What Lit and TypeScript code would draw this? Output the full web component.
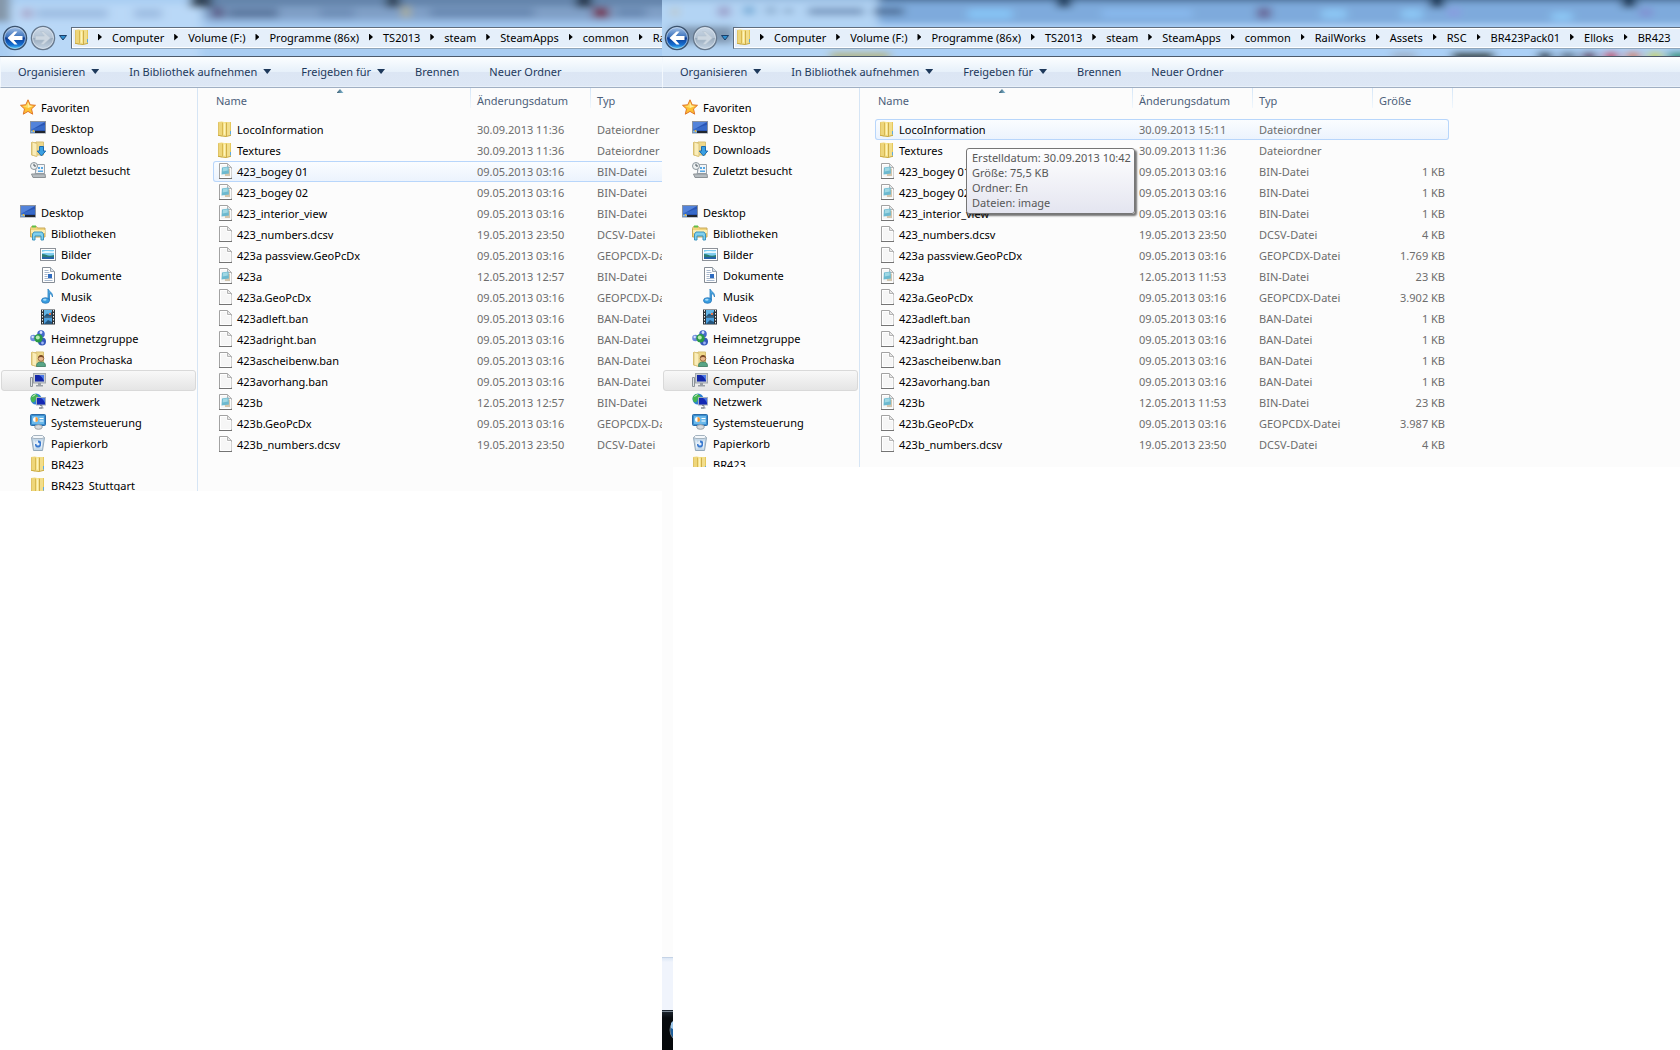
import { LitElement, html, css, svg, nothing, TemplateResult } from "lit";
import { customElement, property } from "lit/decorators.js";
import { classMap } from "lit/directives/class-map.js";

type Entry = { icon: string; name: string; date: string; type: string; size?: string };
type NavItem = { icon: string; label: string; level: number; active?: boolean; gap?: boolean };

const page = svg`
  <path d="M2.500 .5h8l4 4v11h-12z" fill="#f6f6f6" stroke="#a2a2a2"/>
  <path d="M2 15.500h13" stroke="#747474"/>
  <path d="M3.500 14.500v-13h6.500v4h4v9z" fill="#f6f6f6" stroke="#fff"/>
  <path d="M10.500 .5v4h4z" fill="#e8e8e8" stroke="#b4b4b4"/>`;

const folder = svg`
  <path d="M1 1l4-.5v15l-4-1z" fill="#eed67a"/>
  <path d="M8 1h6v13.500H8z" fill="#e6c85c"/>
  <path d="M10 1h3v13h-3z" fill="#f2de8c"/>
  <path d="M5 .5l4.500 1v14.300l-4.500-1.300z" fill="#f6e38f"/>
  <path d="M1.500 1.500v12.500" stroke="#e0c366"/>
  <path d="M5.500 1.500v13" stroke="#d8b850"/>
  <path d="M9.500 2v13" stroke="#cfae48"/>
  <path d="M1 14.300l4 .7 4 .5 5-1.200" fill="none" stroke="#c9a93f"/>
  <path d="M7.500 2.500v11" stroke="#fdf3bd"/>
  <path d="M13 10h1v3.500h-1z" fill="#5fa9dc"/>`;

const plainFolder = svg`
  <path d="M1.500 1.500h4.500v13.500l-4.500-1z" fill="#f0d98a" stroke="#d3b968"/>
  <path d="M6 1h7.500v13H6z" fill="#efd88b" stroke="#d6bf76"/>
  <path d="M2 1l5 1.500v13l-5-1.500z" fill="#faedb8" stroke="#dcc57c"/>`;

const monitor = svg`
  <rect x=".5" y="1.500" width="15" height="11.500" fill="#2a56b4" stroke="#8b93a0"/>
  <path d="M1 2h14L1 10z" fill="#5383da"/>
  <path d="M1 9C5 9 9 6 15 5v5H1z" fill="#3d73d2" opacity=".7"/>
  <path d="M5 11h10v2H5z" fill="#20262f"/>
  <path d="M1 11.500h4" stroke="#7bbcf2" stroke-width="2"/>
  <circle cx="3.500" cy="11" r="1" fill="#f2b632"/>`;

const icons: Record<string, TemplateResult> = {
  folder,
  file: page,
  bin: svg`${page}
    <path d="M7 5.500h6V13H8z" fill="#d3c6ae"/>
    <path d="M5 4.500l6.500-1 .5 7-7.500 1z" fill="#6cb9cf"/>
    <path d="M6 5l4.500-.7.3 3.200L5.700 8.500z" fill="#a0d8e4"/>`,
  star: svg`<path d="M8 .8l2.200 5 5.300.5-4 3.600 1.200 5.300L8 12.400l-4.700 2.800 1.200-5.300-4-3.600 5.300-.5z" fill="#fdc133" stroke="#e0762a"/>
    <path d="M8 3l1.500 3.600 3.500.4-5 2z" fill="#fff0a0"/>
    <path d="M2.500 7l3.500-.3L8 3v6z" fill="#ffde6a"/>`,
  desktop: monitor,
  downloads: svg`${plainFolder}
    <path d="M9.500 5.500h4V10h2.200l-4.200 5-4.200-5h2.200z" fill="#3ba0e2" stroke="#1d6bb0"/>`,
  recent: svg`
    <path d="M5.500 2.500h9v9h-9z" fill="#f2f5f8" stroke="#9aa3ab"/>
    <path d="M2 12.500h3l1-5" stroke="#9aa3ab" fill="none"/>
    <path d="M1.500 12h13.500l.5 3.500H3z" fill="#b6bcc0" stroke="#8c9296"/>
    <path d="M8 5h2v2H8zM11 5h2v2h-2zM8 8.500h5v1.500H8z" fill="#58a8e4"/>
    <circle cx="4" cy="4" r="3.500" fill="#eef1f2" stroke="#8d979d"/>
    <path d="M4 1.800V4h2" stroke="#49545c" fill="none"/>`,
  libraries: svg`
    <path d="M.5 3.500l1-2h5l1 1.500h7.500v9H.5z" fill="#f1d57c" stroke="#c9a95a"/>
    <path d="M2 1.500h4" stroke="#5fbf49" stroke-width="2"/>
    <path d="M1 5h14v3H1z" fill="#fbedb0"/>
    <path d="M2.500 15v-6l1.500-2h8l1.500 2v6h-2.500v-4H5v4z" fill="#7fd0ee" stroke="#3c93bd"/>`,
  pictures: svg`
    <rect x=".5" y="2.500" width="15" height="12" fill="#fff" stroke="#8d9299"/>
    <rect x="2" y="4" width="12" height="9" fill="#7fcdf0"/>
    <path d="M2 6c4-2 7 0 12-1v2H2z" fill="#e6f8ff"/>
    <path d="M2 8c4 0 6 3 12 1v4H2z" fill="#2b7d74"/>
    <path d="M2 11h12v2H2z" fill="#2464a8"/>`,
  documents: svg`
    <path d="M2.500 .5h8l4 4v11h-12z" fill="#fff" stroke="#858c95"/>
    <path d="M10.500 .5v4h4" fill="#dce3ea" stroke="#9ba4ae"/>
    <path d="M4.500 3.500h4M4.500 5.500h5M4.500 7.500h3M4.500 9.500h3M4.500 11.500h8M4.500 13.500h8" stroke="#a8b8cc"/>
    <rect x="8" y="7" width="4" height="4" fill="#2f6cc0"/>`,
  music: svg`
    <path d="M8 1c1 3 5 3 4.500 8-.5-2-1.500-3-3-3.500V12H8z" fill="#4ea9e2" stroke="#2a7fc0" stroke-width=".8"/>
    <ellipse cx="5.500" cy="12.500" rx="4" ry="2.800" fill="#3a9ee0" stroke="#2473b8" stroke-width=".8"/>
    <ellipse cx="4.800" cy="11.800" rx="1.800" ry="1" fill="#a5dafa"/>`,
  videos: svg`
    <rect x="1" y=".5" width="14" height="15" fill="#2d3338"/>
    <rect x="4" y="1" width="8" height="6.500" fill="#63b4e4"/>
    <rect x="4" y="8.500" width="8" height="6.500" fill="#4c9fdc"/>
    <path d="M4 7.500l3-3 2 1 3-3v5zM4 15l4-4 4 2v2z" fill="#24557c"/>
    <path d="M9 4h2v2H9z" fill="#e5764c"/>
    <path d="M2.500 1v15M13.500 1v15" stroke="#f0f0f0" stroke-dasharray="1.500 1.500"/>`,
  homegroup: svg`
    <circle cx="3.500" cy="8" r="3.300" fill="#6d8bdc"/>
    <circle cx="11" cy="4" r="3.800" fill="#4468cb"/>
    <circle cx="12" cy="11.500" r="4" fill="#3558bb"/>
    <circle cx="8.500" cy="8.300" r="4.200" fill="#2a9a47"/>
    <circle cx="7.800" cy="7.500" r="2" fill="#b8ecb0"/>
    <circle cx="2.700" cy="7" r="1.200" fill="#d5e0ff"/>
    <circle cx="11" cy="2.500" r="1.400" fill="#d5e0ff"/>
    <circle cx="12.500" cy="13" r="1.400" fill="#9fb7f5"/>`,
  user: svg`${plainFolder}
    <path d="M6.500 15.500c0-4 2-4.500 4.500-4.500s4.500.5 4.500 4.500z" fill="#58a586" stroke="#37775d" stroke-width=".8"/>
    <circle cx="11" cy="7.500" r="2.800" fill="#e7b78d" stroke="#8b5a35" stroke-width=".8"/>
    <path d="M8.200 7c0-4 5.600-4 5.600 0-2-1.500-3.600-1.500-5.600 0z" fill="#7a4a28"/>`,
  computer: svg`
    <path d="M.5 5.500h2v9h-2z" fill="#dfe3e6" stroke="#8d9398"/>
    <rect x="3.500" y="1.500" width="12" height="9.500" fill="#c8cdd2" stroke="#a2a8ae"/>
    <rect x="5" y="3" width="9" height="6.500" fill="#1327a8"/>
    <path d="M9 3h5v6c-1-3-3-5-5-6z" fill="#4b78e6"/>
    <path d="M8 11h3v2H8zM6 13h7v1.500H6z" fill="#9aa0a6"/>`,
  network: svg`
    <circle cx="6" cy="6" r="5.500" fill="#2d7fd2"/>
    <path d="M2 2.500C5 0 7 1 8 3S6 5 5.500 7 3 10 2 9C.5 7 0 4 2 2.500zM9 4l2.300 1-.8 3z" fill="#45b553"/>
    <path d="M2.500 3.500l3-2" stroke="#e1f7d9"/>
    <rect x="6.500" y="4.500" width="9" height="7.500" fill="#1429b4" stroke="#a6b0bb"/>
    <path d="M11 5h4v5c-1-2-2-4-4-5z" fill="#4674e4"/>
    <path d="M10 12.500h2V15H9h4.500" stroke="#7e8790" fill="none"/>`,
  control: svg`
    <rect x=".5" y=".5" width="15" height="11" rx="1" fill="#3b8ed0" stroke="#2b6ca8"/>
    <rect x="2" y="2" width="12" height="8" fill="#6bb9ea"/>
    <circle cx="5.500" cy="5.500" r="2.500" fill="#fff"/>
    <path d="M5.500 5.500V3a2.500 2.500 0 0 1 0 5z" fill="#f19a38"/>
    <path d="M9.500 4.500h4M9.500 7h4" stroke="#fff"/>
    <ellipse cx="8.500" cy="13" rx="3.800" ry="2.300" fill="#d7dadd" stroke="#9aa0a5"/>`,
  trash: svg`
    <path d="M1.500 2.500l2 13h9l2-13z" fill="#c3d7e8" stroke="#94a9ba"/>
    <path d="M1.500 2.500l2-2h9l2 2-2.500 1H4z" fill="#f4f8fb" stroke="#a5b3bf"/>
    <circle cx="8" cy="9" r="3" fill="#e3eefa"/>
    <path d="M8 6.500a2.500 2.500 0 1 1-2.500 2.500" fill="none" stroke="#3979cf" stroke-width="1.800"/>
    <path d="M4 5.500l1 8M12 5.500l-1 8" stroke="#eef5fb"/>`,
};

const icon = (name: string) =>
  html`<svg class="icon" viewBox="0 0 16 16" width="16" height="16" aria-hidden="true">${icons[name]}</svg>`;

const navItems: NavItem[] = [
  { icon: "star", label: "Favoriten", level: 0 },
  { icon: "desktop", label: "Desktop", level: 1 },
  { icon: "downloads", label: "Downloads", level: 1 },
  { icon: "recent", label: "Zuletzt besucht", level: 1 },
  { icon: "desktop", label: "Desktop", level: 0, gap: true },
  { icon: "libraries", label: "Bibliotheken", level: 1 },
  { icon: "pictures", label: "Bilder", level: 2 },
  { icon: "documents", label: "Dokumente", level: 2 },
  { icon: "music", label: "Musik", level: 2 },
  { icon: "videos", label: "Videos", level: 2 },
  { icon: "homegroup", label: "Heimnetzgruppe", level: 1 },
  { icon: "user", label: "Léon Prochaska", level: 1 },
  { icon: "computer", label: "Computer", level: 1, active: true },
  { icon: "network", label: "Netzwerk", level: 1 },
  { icon: "control", label: "Systemsteuerung", level: 1 },
  { icon: "trash", label: "Papierkorb", level: 1 },
  { icon: "folder", label: "BR423", level: 1 },
  { icon: "folder", label: "BR423_Stuttgart", level: 1 },
];

const path = [
  "Computer", "Volume (F:)", "Programme (86x)", "TS2013", "steam", "SteamApps",
  "common", "RailWorks", "Assets", "RSC", "BR423Pack01", "Elloks", "BR423",
];

const listing = (infoDate: string, modelDate: string): Entry[] => {
  const may9 = "09.05.2013 03:16";
  const may19 = "19.05.2013 23:50";
  return [
    { icon: "folder", name: "LocoInformation", date: infoDate, type: "Dateiordner" },
    { icon: "folder", name: "Textures", date: "30.09.2013 11:36", type: "Dateiordner" },
    { icon: "bin", name: "423_bogey 01", date: may9, type: "BIN-Datei", size: "1 KB" },
    { icon: "bin", name: "423_bogey 02", date: may9, type: "BIN-Datei", size: "1 KB" },
    { icon: "bin", name: "423_interior_view", date: may9, type: "BIN-Datei", size: "1 KB" },
    { icon: "file", name: "423_numbers.dcsv", date: may19, type: "DCSV-Datei", size: "4 KB" },
    { icon: "file", name: "423a passview.GeoPcDx", date: may9, type: "GEOPCDX-Datei", size: "1.769 KB" },
    { icon: "bin", name: "423a", date: modelDate, type: "BIN-Datei", size: "23 KB" },
    { icon: "file", name: "423a.GeoPcDx", date: may9, type: "GEOPCDX-Datei", size: "3.902 KB" },
    { icon: "file", name: "423adleft.ban", date: may9, type: "BAN-Datei", size: "1 KB" },
    { icon: "file", name: "423adright.ban", date: may9, type: "BAN-Datei", size: "1 KB" },
    { icon: "file", name: "423ascheibenw.ban", date: may9, type: "BAN-Datei", size: "1 KB" },
    { icon: "file", name: "423avorhang.ban", date: may9, type: "BAN-Datei", size: "1 KB" },
    { icon: "bin", name: "423b", date: modelDate, type: "BIN-Datei", size: "23 KB" },
    { icon: "file", name: "423b.GeoPcDx", date: may9, type: "GEOPCDX-Datei", size: "3.987 KB" },
    { icon: "file", name: "423b_numbers.dcsv", date: may19, type: "DCSV-Datei", size: "4 KB" },
  ];
};

// Blurred shapes that shine through the glass frame: [x, y, width, height, colour]
type Blot = [number, number, number, number, string];

const browserGlass: Blot[] = [
  [-20, -20, 740, 90, "#a9cdf2"],
  [-20, -20, 30, 42, "#8496a8"],
  [12, 4, 188, 60, "#b9d8f7"],
  [200, -20, 500, 26, "#6484aa"],
  [203, 6, 497, 13, "#7f9fc6"],
  [206, 19, 494, 6, "#95b9e2"],
  [190, -20, 22, 28, "#34465a"],
  [22, 8, 10, 11, "#a8a8cc"],
  [36, 8, 72, 11, "#a0c0e4"],
  [134, 8, 28, 11, "#a0c0e4"],
  [212, 7, 12, 12, "#5c5f8a"],
  [228, 8, 50, 11, "#5f7ca3"],
  [320, 8, 34, 11, "#6f8fb8"],
  [386, -20, 14, 28, "#34465a"],
  [402, 6, 8, 12, "#a9ad98"],
  [430, 8, 104, 10, "#6a8ab3"],
  [576, -20, 16, 28, "#2a3b50"],
  [593, 7, 16, 12, "#743c5c"],
  [616, 8, 30, 10, "#6a8ab3"],
];

const paintGlass: Blot[] = [
  [-20, -20, 1120, 90, "#abd0f6"],
  [-20, -20, 236, 90, "#b3d4f4"],
  [-20, -20, 236, 22, "#98bbdf"],
  [216, -20, 900, 44, "#7eaadc"],
  [216, -20, 900, 22, "#4a6d95"],
  [8, 26, 64, 18, "#8199b3"],
  [10, 7, 6, 10, "#bcc6c4"],
  [56, 6, 12, 11, "#9da3cd"],
  [82, 6, 10, 9, "#74abd6"],
  [104, 6, 10, 9, "#93b3d4"],
  [124, 8, 5, 6, "#6889ac"],
  [146, 7, 56, 9, "#83a3c8"],
  [212, 7, 30, 9, "#587aa4"],
  [306, 9, 44, 10, "#86c3f4"],
  [395, -20, 14, 28, "#24405f"],
  [440, 9, 90, 9, "#88b8ec"],
  [595, 7, 14, 12, "#6b6c9c"],
  [660, 9, 24, 10, "#8cc6f4"],
  [740, 9, 20, 10, "#8cc6f4"],
  [768, -20, 14, 28, "#1f3a58"],
  [786, 8, 12, 9, "#899de0"],
  [890, 12, 20, 9, "#8cc6f4"],
  [960, -20, 14, 28, "#1f3a58"],
  [978, 8, 12, 9, "#8090d2"],
  [168, 52, 60, 9, "#b2b784"],
  [730, 52, 24, 9, "#9fb4cc"],
  [790, 52, 42, 9, "#2f3822"],
  [876, 52, 14, 9, "#060d18"],
  [898, 52, 16, 9, "#5f7289"],
  [920, 52, 14, 9, "#5f1240"],
  [942, 52, 14, 9, "#c02048"],
  [964, 52, 14, 9, "#cf8050"],
  [986, 52, 14, 9, "#c4d23c"],
  [1006, 52, 24, 9, "#1a9478"],
];

const fonts = css`
  :host {
    font-family: "Noto Sans", "Open Sans", sans-serif;
    font-size: 11px;
    line-height: 15px;
    color: #000;
  }
  * {
    box-sizing: border-box;
  }
  button {
    font: inherit;
    color: inherit;
    border: 0;
    padding: 0;
    background: none;
    white-space: nowrap;
  }
`;

@customElement("explorer-window")
export class ExplorerWindow extends LitElement {
  @property({ attribute: false }) entries: Entry[] = [];
  @property({ attribute: false }) glass: Blot[] = [];
  @property({ attribute: false }) crumbs: string[] = [];
  @property({ type: Number }) hot = -1;
  @property({ type: Boolean }) sizes = false;

  static styles = [
    fonts,
    css`
      :host {
        display: flex;
        flex-direction: column;
        overflow: hidden;
        background: #fcfcfc;
      }
      .frame {
        position: relative;
        flex: none;
        padding-top: 26px;
        overflow: hidden;
        background: #a9cdf2;
        border-bottom: 1px solid #4c5a6b;
      }
      .glass {
        position: absolute;
        inset: 0;
        width: 100%;
        height: 100%;
      }
      .address-row {
        position: relative;
        display: flex;
        align-items: center;
        height: 24px;
        margin-bottom: 6px;
        padding-left: 2px;
      }
      .travel {
        display: flex;
        flex: none;
        gap: 2px;
      }
      .travel svg,
      .history svg,
      .icon {
        display: block;
        flex: none;
      }
      .history {
        flex: none;
        padding: 0 4px 0 3px;
      }
      .address {
        display: flex;
        flex: 1;
        align-items: center;
        min-width: 0;
        height: 22px;
        padding: 0 0 2px 2px;
        overflow: hidden;
        background: #e5effa;
        border: 1px solid #5e6d7e;
        border-right: 0;
        border-bottom-color: #8fa5ba;
        box-shadow: inset 1px 1px #fff, inset 0 -1px #fff;
      }
      .address ol {
        display: flex;
        margin: 0;
        padding: 0;
        list-style: none;
      }
      .address li {
        display: flex;
        flex: none;
        align-items: center;
      }
      .chevron {
        flex: none;
        width: 4px;
        height: 7px;
        margin: 0 10px;
        background: #000;
        clip-path: polygon(0 0, 100% 50%, 0 100%);
      }
      .address li:first-child .chevron {
        margin-left: 8px;
      }
      .toolbar {
        display: flex;
        flex: none;
        align-items: center;
        gap: 30px;
        height: 31px;
        padding: 0 0 1px 17px;
        overflow: hidden;
        color: #1e395b;
        background: linear-gradient(#fcfeff, #e6f0fa 15px, #dce6f4 15px, #dde7f5);
        border-left: 1px solid #f3f8fd;
        border-bottom: 1px solid #a0afc3;
        box-shadow: inset 0 -1px #e8f0f9;
      }
      .toolbar button {
        display: flex;
        align-items: center;
        gap: 6px;
      }
      .caret {
        width: 8px;
        height: 5px;
        background: #1e395b;
        clip-path: polygon(0 0, 100% 0, 50% 100%);
      }
      .body {
        display: flex;
        flex: 1;
        min-height: 0;
      }
      nav {
        flex: none;
        width: 198px;
        padding: 9px 1px 0;
        overflow: hidden;
        border-right: 1px solid #d6e5f5;
      }
      nav ul {
        margin: 0;
        padding: 0;
        list-style: none;
      }
      nav a {
        display: flex;
        align-items: center;
        gap: 5px;
        height: 21px;
        padding: 0 0 1px 18px;
        color: #000;
        text-decoration: none;
        white-space: nowrap;
        border: 1px solid transparent;
        border-radius: 3px;
      }
      nav .level-1 {
        padding-left: 28px;
      }
      nav .level-2 {
        padding-left: 38px;
      }
      nav .active {
        background: linear-gradient(#f8f8f8, #e5e5e5);
        border-color: #d9d9d9;
      }
      nav .gap {
        margin-top: 21px;
      }
      .files {
        flex: 1;
        min-width: 0;
        padding-left: 15px;
        overflow: hidden;
      }
      table,
      thead,
      tbody {
        display: block;
      }
      tr {
        display: grid;
        grid-template-columns: 258px 120px 120px 76px;
        width: 574px;
        height: 21px;
        align-items: center;
        padding-bottom: 1px;
        border-radius: 3px;
      }
      thead tr {
        grid-template-columns: 258px 120px 120px 80px;
        width: 578px;
        height: 31px;
        align-items: start;
      }
      th {
        position: relative;
        height: 20px;
        padding: 5px 0 0 6px;
        font-weight: normal;
        line-height: 15px;
        text-align: left;
        color: #4c607a;
        border-right: 1px solid;
        border-image: linear-gradient(#d3e5f7, #f2f8fd) 1;
      }
      th:first-child {
        padding-left: 3px;
      }
      .sort {
        position: absolute;
        top: 1px;
        left: 50%;
        width: 7px;
        height: 4px;
        margin-left: -5px;
        background: linear-gradient(90deg, #3c5e72, #8cc6e2);
        clip-path: polygon(50% 0, 100% 100%, 0 100%);
      }
      td {
        padding: 0 0 0 6px;
        color: #6d6d6d;
        white-space: nowrap;
      }
      .name {
        display: flex;
        align-items: center;
        gap: 4px;
        padding-left: 4px;
        color: #000;
      }
      .size {
        padding: 0 4px 0 0;
        text-align: right;
      }
      .hot {
        background: linear-gradient(#fbfdff, #ebf3fd);
        box-shadow: inset 0 0 0 1px #b8d6fb;
      }
    `,
  ];

  private renderFrame() {
    return html`
      <header class="frame">
        <svg class="glass" aria-hidden="true">
          <defs>
            <filter id="haze" filterUnits="userSpaceOnUse" x="-20" y="-20" width="1100" height="100">
              <feGaussianBlur stdDeviation="5 3" />
            </filter>
          </defs>
          <g filter="url(#haze)">
            ${this.glass.map(
              ([x, y, w, h, fill]) => svg`<rect x=${x} y=${y} width=${w} height=${h} fill=${fill}></rect>`,
            )}
          </g>
        </svg>
        <div class="address-row">
          <div class="travel">
            <button aria-label="Zurück">
              <svg width="26" height="26" viewBox="0 0 26 26">
                <defs>
                  <linearGradient id="orb" x2="0" y2="1">
                    <stop offset="0" stop-color="#a9c6ea" />
                    <stop offset=".45" stop-color="#3c72bc" />
                    <stop offset=".5" stop-color="#0b3b94" />
                    <stop offset=".8" stop-color="#1570d2" />
                    <stop offset="1" stop-color="#5fdcff" />
                  </linearGradient>
                </defs>
                <circle cx="13" cy="13" r="11.500" fill="url(#orb)" stroke="#3b536f" stroke-width="1.500" />
                <circle cx="13" cy="13" r="10.500" fill="none" stroke="#d4e6f8" stroke-opacity=".6" />
                <path d="M5.500 13l7-6.500h3L11.700 11h8.800v4h-8.800l3.800 4.500h-3z" fill="#fff" />
              </svg>
            </button>
            <button aria-label="Vorwärts">
              <svg width="26" height="26" viewBox="0 0 26 26">
                <defs>
                  <linearGradient id="dim" x2="0" y2="1">
                    <stop offset="0" stop-color="#ccd9e7" />
                    <stop offset=".48" stop-color="#b3c3d4" />
                    <stop offset=".52" stop-color="#9aabbd" />
                    <stop offset="1" stop-color="#c6d6e6" />
                  </linearGradient>
                </defs>
                <circle cx="13" cy="13" r="11.500" fill="url(#dim)" stroke="#66788d" stroke-width="1.500" />
                <circle cx="13" cy="13" r="10.500" fill="none" stroke="#eef5fc" stroke-opacity=".6" />
                <path d="M20.500 13l-7-6.500h-3l3.800 4.500H5.500v4h8.800l-3.800 4.500h3z" fill="#cdd7e1" stroke="#b4c2d0" stroke-width=".6" />
              </svg>
            </button>
          </div>
          <button class="history" aria-label="Verlauf">
            <svg width="8" height="6" viewBox="0 0 8 6"><path d="M.5 .5h7L4 5z" fill="#2f8fd0" stroke="#1b3f6a" /></svg>
          </button>
          <div class="address" role="navigation" aria-label="Adresse">
            ${icon("folder")}
            <ol>
              ${this.crumbs.map((c) => html`<li><span class="chevron"></span><button>${c}</button></li>`)}
            </ol>
          </div>
        </div>
      </header>
    `;
  }

  private renderToolbar() {
    const actions: [string, boolean][] = [
      ["Organisieren", true],
      ["In Bibliothek aufnehmen", true],
      ["Freigeben für", true],
      ["Brennen", false],
      ["Neuer Ordner", false],
    ];
    return html`
      <div class="toolbar" role="toolbar">
        ${actions.map(
          ([label, menu]) => html`<button>${label}${menu ? html`<span class="caret"></span>` : nothing}</button>`,
        )}
      </div>
    `;
  }

  private renderNav() {
    return html`
      <nav aria-label="Ordner">
        <ul>
          ${navItems.map(
            (n) => html`
              <li>
                <a
                  href="#"
                  class=${classMap({ [`level-${n.level}`]: true, active: !!n.active, gap: !!n.gap })}
                  >${icon(n.icon)}<span>${n.label}</span></a
                >
              </li>
            `,
          )}
        </ul>
      </nav>
    `;
  }

  render() {
    return html`
      ${this.renderFrame()} ${this.renderToolbar()}
      <div class="body">
        ${this.renderNav()}
        <div class="files">
          <table>
            <thead>
              <tr>
                <th><button>Name</button><span class="sort"></span></th>
                <th><button>Änderungsdatum</button></th>
                <th><button>Typ</button></th>
                ${this.sizes ? html`<th><button>Größe</button></th>` : nothing}
              </tr>
            </thead>
            <tbody>
              ${this.entries.map(
                (e, i) => html`
                  <tr class=${classMap({ hot: i === this.hot })}>
                    <td class="name">${icon(e.icon)}<span>${e.name}</span></td>
                    <td>${e.date}</td>
                    <td>${e.type}</td>
                    ${this.sizes ? html`<td class="size">${e.size ?? ""}</td>` : nothing}
                  </tr>
                `,
              )}
            </tbody>
          </table>
        </div>
      </div>
    `;
  }
}

@customElement("app-root")
export class AppRoot extends LitElement {
  static styles = [
    fonts,
    css`
      :host {
        display: block;
        background: #fff;
      }
      .desktop {
        display: flex;
        align-items: stretch;
        min-height: 100vh;
      }
      .left {
        flex: 662 1 0;
        min-width: 0;
      }
      .right {
        position: relative;
        display: flex;
        flex: 1018 1 0;
        flex-direction: column;
        min-width: 0;
      }
      .left explorer-window {
        height: 491px;
      }
      .right explorer-window {
        height: 467px;
      }
      .behind {
        display: flex;
        flex: 1;
        flex-direction: column;
        width: 11px;
        background: #fcfcfc;
      }
      .details {
        height: 53px;
        margin-top: auto;
        background: linear-gradient(#dce7f5, #f0f4fc 4px);
        border-top: 1px solid #c5d3e6;
      }
      .taskbar {
        height: 40px;
        overflow: hidden;
        background: linear-gradient(#1d262e 1px, #7b8894 1px, #7b8894 2px, #1a222a 2px, #070b0e 8px, #05080a);
      }
      .taskbar svg {
        display: block;
      }
      .tip {
        position: absolute;
        top: 148px;
        left: 304px;
        width: 169px;
        padding: 1px 5px 3px;
        color: #575757;
        white-space: nowrap;
        background: linear-gradient(#fff, #e4e5f0);
        border: 1px solid #767676;
        border-radius: 3px;
        box-shadow: 2px 2px 2px rgba(0, 0, 0, 0.55);
      }
    `,
  ];

  render() {
    return html`
      <main class="desktop">
        <div class="left">
          <explorer-window
            .entries=${listing("30.09.2013 11:36", "12.05.2013 12:57")}
            .glass=${browserGlass}
            .crumbs=${path.slice(0, 8)}
            .hot=${2}
          ></explorer-window>
        </div>
        <div class="right">
          <explorer-window
            .entries=${listing("30.09.2013 15:11", "12.05.2013 11:53")}
            .glass=${paintGlass}
            .crumbs=${path}
            .hot=${0}
            .sizes=${true}
          ></explorer-window>
          <div class="behind">
            <div class="details"></div>
            <div class="taskbar">
              <svg width="11" height="40" viewBox="0 0 11 40" aria-hidden="true">
                <ellipse cx="17" cy="20" rx="9" ry="11" fill="#1d5f9c" stroke="#6d7d8a" />
                <path d="M9 18V13l2-2v8z" fill="#9fc9ec" />
              </svg>
            </div>
          </div>
          <div class="tip" role="tooltip">
            <div>Erstelldatum: 30.09.2013 10:42</div>
            <div>Größe: 75,5 KB</div>
            <div>Ordner: En</div>
            <div>Dateien: image</div>
          </div>
        </div>
      </main>
    `;
  }
}
